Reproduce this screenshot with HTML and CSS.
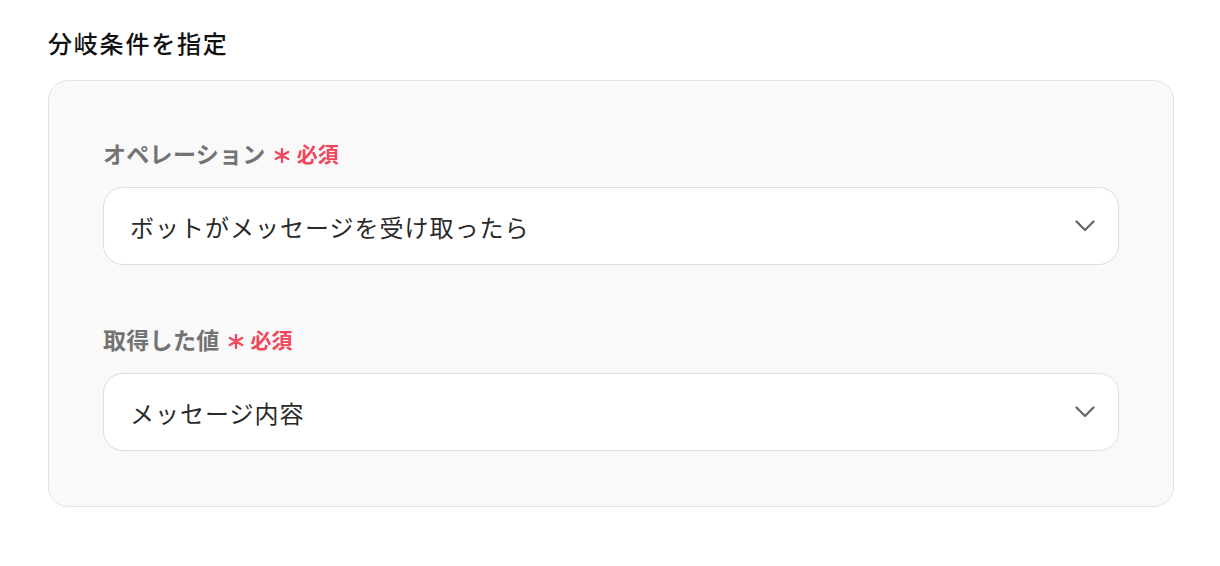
FILE: index.html
```html
<!DOCTYPE html>
<html lang="ja">
<head>
<meta charset="utf-8">
<link rel="stylesheet" href="styles.css">
</head>
<body>
<main class="page">
  <h2 class="title">分岐条件を指定</h2>
  <section class="card">
    <div class="field">
      <div class="label">オペレーション<span class="req"><svg class="ast" width="16" height="15" viewBox="0 0 16 15"><path d="M8 0.8 V14.2 M1.8 3.9 L14.2 11.1 M1.8 11.1 L14.2 3.9" fill="none" stroke="#f0475c" stroke-width="2.3" stroke-linecap="round"/></svg>必須</span></div>
      <div class="select">
        <span class="value">ボットがメッセージを受け取ったら</span>
        <svg class="chev" width="20" height="12" viewBox="0 0 20 12"><path d="M1.5 1.5 L10 10 L18.5 1.5" fill="none" stroke="#666" stroke-width="2.2" stroke-linecap="round" stroke-linejoin="round"/></svg>
      </div>
    </div>
    <div class="field">
      <div class="label">取得した値<span class="req"><svg class="ast" width="16" height="15" viewBox="0 0 16 15"><path d="M8 0.8 V14.2 M1.8 3.9 L14.2 11.1 M1.8 11.1 L14.2 3.9" fill="none" stroke="#f0475c" stroke-width="2.3" stroke-linecap="round"/></svg>必須</span></div>
      <div class="select">
        <span class="value">メッセージ内容</span>
        <svg class="chev" width="20" height="12" viewBox="0 0 20 12"><path d="M1.5 1.5 L10 10 L18.5 1.5" fill="none" stroke="#666" stroke-width="2.2" stroke-linecap="round" stroke-linejoin="round"/></svg>
      </div>
    </div>
  </section>
</main>
</body>
</html>
```
FILE: styles.css
```css
* { box-sizing: border-box; }
html, body { margin: 0; padding: 0; background: #fff; }
body { font-family: "Noto Sans CJK JP", "Noto Sans", sans-serif; }
.page { padding: 26px 46px 0 48px; }
.title {
  margin: 0 0 20px;
  font-size: 24px;
  line-height: 34px;
  font-weight: 500;
  color: #111;
  letter-spacing: 1.8px;
}
.card {
  background: #f9f9f9;
  border: 1px solid #e2e2e2;
  border-radius: 20px;
  padding: 55px 54px 55px 54px;
  display: flex;
  flex-direction: column;
  gap: 57px;
}
.field { display: flex; flex-direction: column; gap: 17px; }
.label {
  font-size: 23px;
  line-height: 34px;
  font-weight: 700;
  color: #737373;
  display: flex;
  align-items: center;
  letter-spacing: 0.3px;
}
.req {
  color: #f0475c;
  font-size: 21px;
  font-weight: 700;
  margin-left: 8px;
  display: flex;
  align-items: center;
  letter-spacing: 0;
}
.ast { display: block; margin: 4px 7px 0 0; }
.select {
  height: 78px;
  background: #fff;
  border: 1px solid #dedede;
  border-radius: 20px;
  display: flex;
  align-items: center;
  justify-content: space-between;
  padding: 0 23px 0 26px;
}
.value {
  font-size: 24px;
  color: #2a2a2a;
  letter-spacing: 1px;
}
.chev { display: block; }
```
